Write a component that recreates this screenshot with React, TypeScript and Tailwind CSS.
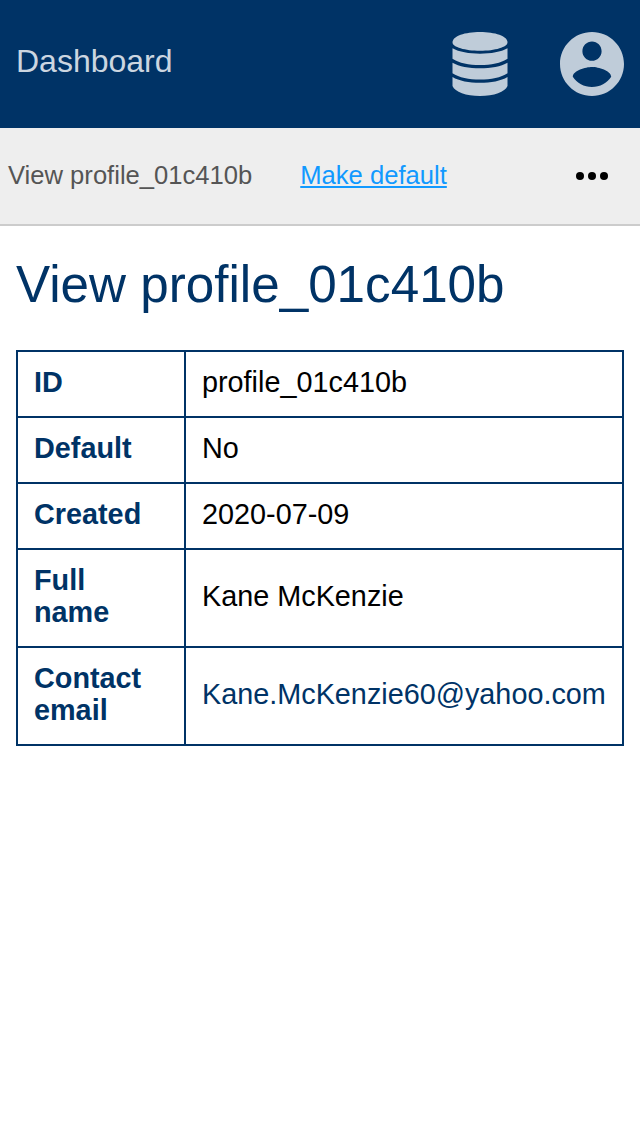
const rows = [
  { label: "ID", value: "profile_01c410b" },
  { label: "Default", value: "No" },
  { label: "Created", value: "2020-07-09" },
  { label: "Full name", value: "Kane McKenzie" },
  { label: "Contact email", value: "Kane.McKenzie60@yahoo.com", href: "mailto:Kane.McKenzie60@yahoo.com" },
];

function DatabaseIcon() {
  return (
    <svg className="h-16 w-14" viewBox="0 0 56 64" fill="currentColor">
      <path d="M28 0C43 0 55.500 4 55.500 10.500C55.500 15 43 18.800 28 18.800S.5 15 .5 10.500C.5 4 13 0 28 0Z" />
      <path d="M.5 16.300C7 20 17 21.700 28 21.700S49 20 55.500 16.300V26.700C49 31 39 33 28 33S7 31 .5 26.700Z" />
      <path d="M.5 30.700C7 34.500 17 36.300 28 36.300S49 34.500 55.500 30.700V41.300C49 45.600 39 47.600 28 47.600S7 45.600.5 41.300Z" />
      <path d="M.5 45C7 49 17 50.800 28 50.800S49 49 55.500 45V54C53 60 42 64 28 64S3 60 .5 54Z" />
    </svg>
  );
}

function AccountIcon() {
  return (
    <svg className="size-16" viewBox="2 2 20 20" fill="currentColor">
      <path d="M12 2C6.48 2 2 6.48 2 12s4.48 10 10 10 10-4.48 10-10S17.52 2 12 2zm0 3c1.66 0 3 1.34 3 3s-1.34 3-3 3-3-1.34-3-3 1.34-3 3-3zm0 14.200c-2.500 0-4.710-1.280-6-3.220.03-1.990 4-3.080 6-3.080 1.990 0 5.970 1.090 6 3.080-1.290 1.940-3.500 3.220-6 3.220z" />
    </svg>
  );
}

export default function App() {
  return (
    <div className="min-h-[1136px] bg-white font-['Liberation_Sans',Arial,sans-serif] text-black">
      <header className="flex h-32 items-center justify-between bg-[#003366] px-4 text-[#bfccd9]">
        <a href="#" className="pb-1.5 text-[32px] leading-9 text-[#ccd6e0]">Dashboard</a>
        <nav className="flex items-center gap-[52px]">
          <DatabaseIcon />
          <AccountIcon />
        </nav>
      </header>
      <div className="flex h-[98px] items-center border-b-2 border-[#cccccc] bg-[#eeeeee] px-2 text-[25.6px] leading-8">
        <span className="pb-0.5 text-[#555555]">View profile_01c410b</span>
        <a href="#" className="ml-12 pb-0.5 text-[#1199ff] underline">Make default</a>
        <svg className="mr-6 ml-auto h-2 w-8" viewBox="0 0 32 8">
          <circle cx="4" cy="4" r="4" />
          <circle cx="16" cy="4" r="4" />
          <circle cx="28" cy="4" r="4" />
        </svg>
      </div>
      <main className="px-4 pt-[29px]">
        <h1 className="text-[51.2px] leading-[60px] text-[#003366]">View profile_01c410b</h1>
        <table className="mt-[35px] w-full table-fixed border-collapse border-2 border-[#003366] text-[28.8px] leading-8">
          <tbody>
            {rows.map((row) => (
              <tr key={row.label}>
                <th className="w-[168px] border-2 border-[#003366] px-4 pt-[14px] pb-[18px] text-left font-bold text-[#003366]">{row.label}</th>
                <td className="border-2 border-[#003366] px-4 pt-[14px] pb-[18px] whitespace-nowrap">
                  {row.href ? <a href={row.href} className="text-[#003366]">{row.value}</a> : row.value}
                </td>
              </tr>
            ))}
          </tbody>
        </table>
      </main>
    </div>
  );
}
